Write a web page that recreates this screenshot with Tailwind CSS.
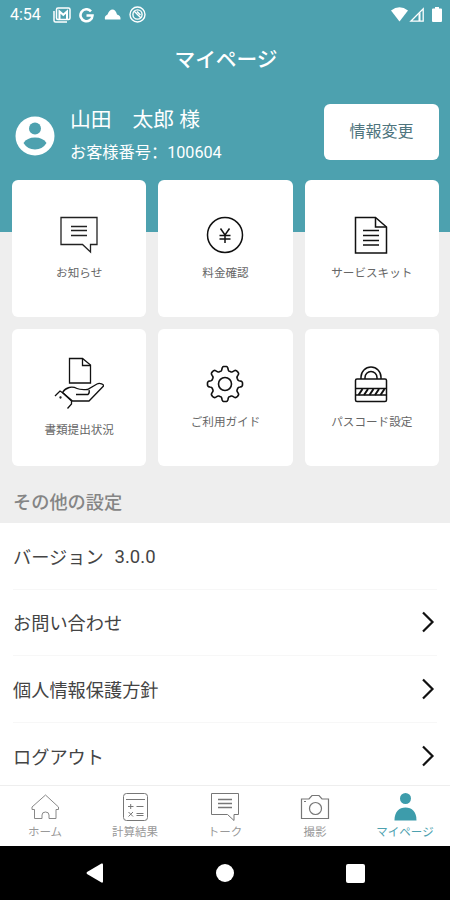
<!DOCTYPE html>
<html lang="ja">
<head>
    <meta charset="UTF-8">
    <meta name="viewport" content="width=device-width, initial-scale=1.0">
    <title>マイページ</title>
    <script src="https://cdn.jsdelivr.net/npm/@tailwindcss/browser@4"></script>
</head>
<body class="bg-white font-['Roboto','Noto_Sans_CJK_JP',sans-serif]">
    <div class="w-[450px] h-[900px] flex flex-col overflow-hidden">
        <!-- Header -->
        <header class="h-[232px] shrink-0 bg-[#4da1af] text-white">
            <!-- Status bar -->
            <div class="h-[30px] flex items-center justify-between pl-[10px] pr-[8px]">
                <div class="flex items-center">
                    <span class="w-[43px] text-base leading-none">4:54</span>
                    <svg class="w-[18px] h-[16px]" viewBox="0 0 18 16" fill="none" stroke="#fff">
                        <path d="M1 4v9.500Q1 15 2.500 15H14" stroke-width="1.500"/>
                        <rect x="3.500" y="1" width="13.500" height="11.500" rx="1.500" stroke-width="1.500"/>
                        <path d="M6.500 12V4.500l3.800 3.300L14 4.500V12" stroke-width="2"/>
                    </svg>
                    <svg class="w-[15px] h-[15px] ml-[8px]" viewBox="0 0 15 15" fill="none" stroke="#fff" stroke-width="2.600">
                        <path d="M12 3.300A6 6 0 1 0 13.500 7.500H7.500"/>
                    </svg>
                    <svg class="w-[17px] h-[12px] ml-[10px] -mt-[3px]" viewBox="0 0 17 12" fill="#fff">
                        <path d="M1 11.500Q0 8 3.500 6.500 5.500 1.500 8.500 1.500T13 6.500Q17 7.500 16.500 11.500z"/>
                    </svg>
                    <svg class="w-[17px] h-[17px] ml-[8px] -mt-[2px]" viewBox="0 0 17 17" fill="none" stroke="#fff" stroke-width="1.400">
                        <circle cx="8.500" cy="8.500" r="7.500"/>
                        <circle cx="8.500" cy="8.500" r="4.600"/>
                        <path d="M5 5l7 7M8 5.500l3.500 3.500"/>
                    </svg>
                </div>
                <div class="flex items-center -mt-[2px]">
                    <svg class="w-[17px] h-[15px]" viewBox="0 0 17 15" fill="#fff"><path d="M0 3.500Q8.500-2.800 17 3.500L8.500 14.500z"/></svg>
                    <svg class="w-[15px] h-[15px] ml-[1px]" viewBox="0 0 15 15" fill="none" stroke="#fff" stroke-width="1.300"><path d="M1.800 14.200L14.200 1.800V14.200z"/><path d="M9.500 7v7h2V5.500z" fill="#fff" stroke="none"/></svg>
                    <svg class="w-[10px] h-[15px] ml-[8px]" viewBox="0 0 10 15" fill="#fff"><path d="M3 0h4v1.500h2q1 0 1 1V14q0 1-1 1H1q-1 0-1-1V2.500q0-1 1-1h2z"/></svg>
                </div>
            </div>

            <h1 class="h-[58px] flex items-center justify-center pt-[4px] pl-[2px] text-[20.7px] font-medium">マイページ</h1>

            <!-- Profile -->
            <div class="flex items-center h-14 mt-[16px] pl-[15px] pr-[11px]">
                <svg class="w-[40px] h-[40px] mt-[7px]" viewBox="0 0 40 40">
                    <circle cx="20" cy="20" r="19.500" fill="#fff"/>
                    <circle cx="20" cy="12.500" r="6" fill="#4da1af"/>
                    <path d="M8.500 27Q12 21.500 20 21.500T31.500 27Q27.500 33.500 20 33.500T8.500 27z" fill="#4da1af"/>
                </svg>
                <div class="ml-[15px] mt-[8px] flex flex-col whitespace-pre">
                    <span class="text-[20.8px] leading-[32px]">山田　太郎 様</span>
                    <span class="text-[16.2px] leading-[31px]">お客様番号<span lang="zh-CN" class="font-['Noto_Sans_CJK_SC',sans-serif]">：</span>100604</span>
                </div>
                <button class="ml-auto w-[115px] h-14 rounded-md bg-white text-[16px] text-[#4f757e]">情報変更</button>
            </div>
        </header>

        <!-- Menu -->
        <section class="h-[291px] shrink-0 flex flex-col bg-[#eee]">
            <div class="-mt-[52.500px] grid grid-cols-3 gap-3 pl-[12px] pr-[11px] text-[11.6px] text-[#666] text-center leading-[18px]">
                <div class="h-[137px] rounded-md bg-white flex flex-col items-center pt-[35px]">
                    <svg class="w-[40px] h-[40px]" viewBox="0 0 40 40" fill="none" stroke="#222" stroke-width="1.300">
                        <path d="M2 2.500h36v27h-6.500v7.500l-8-7.500H2z"/>
                        <path d="M12 11.500h16M12 15.500h16M12 20.500h16"/>
                    </svg>
                    <span class="mt-[9px]">お知らせ</span>
                </div>
                <div class="h-[137px] rounded-md bg-white flex flex-col items-center pt-[35px]">
                    <svg class="w-[40px] h-[40px]" viewBox="0 0 40 40" fill="none" stroke="#111" stroke-width="1.500">
                        <circle cx="20" cy="20" r="17.500"/>
                        <path d="M15.500 13.500L20 20l4.500-6.500M20 20v8M14.500 20.500h11M14.500 24h11"/>
                    </svg>
                    <span class="mt-[9px]">料金確認</span>
                </div>
                <div class="h-[137px] rounded-md bg-white flex flex-col items-center pt-[35px]">
                    <svg class="w-[40px] h-[40px] mr-[2px]" viewBox="0 0 40 40" fill="none" stroke="#111" stroke-width="1.500">
                        <path d="M4.500 2.500h20l11 9.500v26h-31z"/>
                        <path d="M24.500 3v9h11"/>
                        <path d="M12 15.500h16M12 20.500h16M12 25.500h16M12 30h16" stroke-width="1.400"/>
                    </svg>
                    <span class="mt-[9px]">サービスキット</span>
                </div>
                <div class="h-[137px] rounded-md bg-white flex flex-col items-center pt-[27px]">
                    <svg class="w-[50px] h-[54px]" viewBox="0 0 50 54" fill="none" stroke="#111" stroke-width="1.300">
                        <path d="M15.500 2.500h13l8 6.500v18h-21z"/>
                        <path d="M28.500 2.500v7h8"/>
                        <path d="M1 40l5-5 3 2 8.500 8v3l-4 4.500"/>
                        <path d="M8.500 36.500C12 31 18 30 23 32.500c3 1.500 7 1 10.500 1L43 28c3-1.500 7 .5 6.500 2L35 45H18.500z"/>
                        <path d="M22 38.500h12q2-1.500 1-4.500"/>
                        <circle cx="6.500" cy="41.500" r=".5"/>
                    </svg>
                    <span class="mt-[11px]">書類提出状況</span>
                </div>
                <div class="h-[137px] rounded-md bg-white flex flex-col items-center pt-[35px]">
                    <!-- teeth are drawn by the script below -->
                    <svg class="w-[40px] h-[40px]" viewBox="0 0 40 40" fill="none" stroke="#111" stroke-width="1.600" stroke-linejoin="round">
                        <path id="gear"/>
                        <circle cx="20" cy="20" r="6.500"/>
                    </svg>
                    <span class="mt-[9px]">ご利用ガイド</span>
                </div>
                <div class="h-[137px] rounded-md bg-white flex flex-col items-center pt-[35px]">
                    <svg class="w-[40px] h-[40px] mr-[1px]" viewBox="0 0 40 40" fill="none" stroke="#111" stroke-width="1.500">
                        <path d="M10 15v-2a10 10 0 0 1 20 0v2M14 15v-1.500a6 6 0 0 1 12 0V15"/>
                        <rect x="4.500" y="15" width="31" height="22.500" rx="1.500"/>
                        <path d="M4.500 24.500h31M4.500 31h31"/>
                        <path d="M7.500 31l4-6M13 31l4-6M18.500 31l4-6M24 31l4-6M29.500 31l4-6" stroke-width="2"/>
                    </svg>
                    <span class="mt-[9px]">パスコード設定</span>
                </div>
            </div>
            <h2 class="mt-[25px] pl-[13px] text-[18.2px] leading-[24px] font-medium text-[#858585]">その他の設定</h2>
        </section>

        <!-- Settings -->
        <ul class="h-[262px] shrink-0 overflow-hidden px-[13px] text-[18.2px] text-[#444]">
            <li class="h-[66.500px] flex items-center pt-[3px] border-b border-[#f7f7f7]">バージョン<span class="ml-[11px] mt-[2px] text-[18.500px]">3.0.0</span></li>
            <li class="h-[66.500px] flex items-center justify-between pt-[2px] border-b border-[#f7f7f7]">
                お問い合わせ
                <svg class="w-[16px] h-[22px] -mt-[2px]" viewBox="0 0 16 22" fill="none" stroke="#111" stroke-width="2.200"><path d="M2 1.500l9.500 9.500L2 20.500"/></svg>
            </li>
            <li class="h-[66.500px] flex items-center justify-between pt-[3px] border-b border-[#f7f7f7]">
                個人情報保護方針
                <svg class="w-[16px] h-[22px] -mt-[3px]" viewBox="0 0 16 22" fill="none" stroke="#111" stroke-width="2.200"><path d="M2 1.500l9.500 9.500L2 20.500"/></svg>
            </li>
            <li class="h-[66.500px] flex items-center justify-between pt-[3px]">
                ログアウト
                <svg class="w-[16px] h-[22px] -mt-[3px]" viewBox="0 0 16 22" fill="none" stroke="#111" stroke-width="2.200"><path d="M2 1.500l9.500 9.500L2 20.500"/></svg>
            </li>
        </ul>

        <!-- Tab bar -->
        <nav class="h-[61px] shrink-0 grid grid-cols-5 border-t border-[#eee] text-[11.500px] leading-[16px] text-[#999]">
            <a class="flex flex-col items-center pt-[6px]">
                <svg class="w-[30px] h-[30px]" viewBox="0 0 30 30" fill="none" stroke="#888"><path d="M4.500 17.500H2V15L15.500 3 28.500 15v2.500H26V26.500h-7V23q0-3-3.500-3T12 23v3.500H4.500z"/></svg>
                <span class="mt-[2px]">ホーム</span>
            </a>
            <a class="flex flex-col items-center pt-[6px]">
                <svg class="w-[30px] h-[30px]" viewBox="0 0 30 30" fill="none" stroke="#777"><rect x="3.500" y="1.500" width="24" height="27" rx="3"/><path d="M6 7.500h19"/><path d="M8 14.500h5.500M10.700 12v5M16.500 14.500h7M8.500 20l4.500 4.500M13 20l-4.500 4.500M16.500 21.500h7M16.500 23.500h7"/></svg>
                <span class="mt-[2px]">計算結果</span>
            </a>
            <a class="flex flex-col items-center pt-[6px]">
                <svg class="w-[30px] h-[30px]" viewBox="0 0 30 30" fill="none" stroke="#777"><path d="M1.500 1.500h27v21H24v6l-6.500-6h-16z"/><path d="M8 7.500h14M8 11.500h14M8 15.500h14" stroke-width="1.300"/></svg>
                <span class="mt-[2px]">トーク</span>
            </a>
            <a class="flex flex-col items-center pt-[6px]">
                <svg class="w-[30px] h-[30px]" viewBox="0 0 30 30" fill="none" stroke="#777" stroke-width="1.200"><path d="M1.500 7H9l3-3.500h7L22 7h6.500v19.500h-27z"/><circle cx="15.500" cy="16.500" r="6"/><path d="M4 9.500h2"/></svg>
                <span class="mt-[2px]">撮影</span>
            </a>
            <a class="flex flex-col items-center pt-[6px] text-[#4da1af]">
                <svg class="w-[30px] h-[30px]" viewBox="0 0 30 30" fill="#3d9cab"><circle cx="15.500" cy="6.500" r="5.500"/><path d="M4.500 28.500C4.500 19.500 9 15.500 15.500 15.500S26.500 19.500 26.500 28.500z"/></svg>
                <span class="mt-[2px]">マイページ</span>
            </a>
        </nav>

        <!-- System navigation -->
        <div class="h-[54px] shrink-0 flex items-center justify-between bg-black pl-[86px] pr-[85px]">
            <svg class="w-[18px] h-[20px]" viewBox="0 0 18 20" fill="#fff"><path d="M1 9L15.500.5Q17 0 17 1.500v17q0 1.500-1.500 1L1 11Q0 10 1 9z"/></svg>
            <span class="w-[18px] h-[18px] rounded-full bg-white"></span>
            <span class="w-[19px] h-[19px] rounded-[2px] bg-white"></span>
        </div>
    </div>

    <script>
        // eight rounded teeth around the centre of the gear
        var d = '';
        for (var i = 0; i <= 160; i++) {
            var a = i / 160 * Math.PI * 2;
            var r = 15.5 + 2.1 * Math.tanh(2.2 * Math.cos(8 * a));
            d += (i ? 'L' : 'M') + (20 + r * Math.cos(a)).toFixed(2) + ' ' + (20 + r * Math.sin(a)).toFixed(2);
        }
        document.getElementById('gear').setAttribute('d', d + 'z');
    </script>
</body>
</html>
